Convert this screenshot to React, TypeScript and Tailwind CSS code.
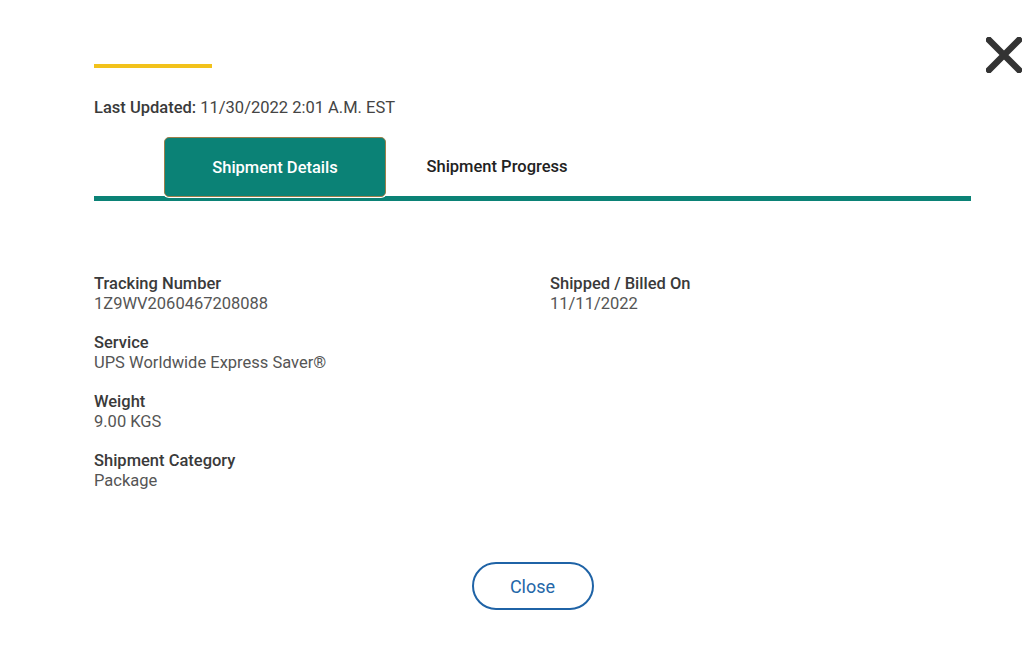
import React, { useState } from 'react';

interface Field {
  label: string;
  value: string;
}

const LEFT_FIELDS: Field[] = [
  { label: 'Tracking Number', value: '1Z9WV2060467208088' },
  { label: 'Service', value: 'UPS Worldwide Express Saver®' },
  { label: 'Weight', value: '9.00 KGS' },
  { label: 'Shipment Category', value: 'Package' },
];

const RIGHT_FIELDS: Field[] = [{ label: 'Shipped / Billed On', value: '11/11/2022' }];

const FieldBlock: React.FC<{ field: Field }> = ({ field }) => (
  <div className="mb-[19px]">
    <div className="text-[16.5px] leading-[20px] font-medium text-[#3a3a3a]">{field.label}</div>
    <div className="text-[16.5px] leading-[20px] text-[#555555]">{field.value}</div>
  </div>
);

const App: React.FC = () => {
  const [activeTab, setActiveTab] = useState<'details' | 'progress'>('details');

  return (
    <div className="relative w-[1024px] h-[651px] bg-white overflow-hidden font-['Roboto',sans-serif]">
      {/* Close icon */}
      <button className="absolute left-[986px] top-[37px] w-[36px] h-[36px]" aria-label="Close dialog">
        <svg width="36" height="36" viewBox="0 0 36 36">
          <path d="M3 3 L33 33 M33 3 L3 33" stroke="#333333" strokeWidth="6.5" strokeLinecap="square" fill="none" />
        </svg>
      </button>

      <div className="ml-[94px] w-[877px] pt-[64px]">
        <div className="w-[118px] h-[4px] bg-[#f2c21b]" />

        <p className="mt-[30px] text-[16.5px] leading-[20px] text-[#444444]">
          <span className="font-medium text-[#3a3a3a]">Last Updated:</span> 11/30/2022 2:01 A.M. EST
        </p>

        {/* Tabs */}
        <div className="mt-[19px] flex pl-[70px] h-[59px]">
          <button
            onClick={() => setActiveTab('details')}
            className={`w-[222px] h-[60px] rounded-[5px] text-[16.5px] font-medium relative z-10 pt-[2px] ${
              activeTab === 'details'
                ? 'bg-[#0b8276] text-white border-[1.5px] border-[#9c7f4a] shadow-[0_0_0_1px_white]'
                : 'text-[#222222]'
            }`}
          >
            Shipment Details
          </button>
          <button
            onClick={() => setActiveTab('progress')}
            className={`w-[222px] h-[60px] rounded-[5px] text-[16.5px] font-medium ${
              activeTab === 'progress'
                ? 'bg-[#0b8276] text-white border-[1.5px] border-[#9c7f4a]'
                : 'text-[#222222]'
            }`}
          >
            Shipment Progress
          </button>
        </div>
        <div className="h-[5px] bg-[#0b8276]" />

        {/* Details */}
        <div className="mt-[73px] grid grid-cols-[456px_1fr]">
          <div>
            {LEFT_FIELDS.map(f => (
              <FieldBlock key={f.label} field={f} />
            ))}
          </div>
          <div>
            {RIGHT_FIELDS.map(f => (
              <FieldBlock key={f.label} field={f} />
            ))}
          </div>
        </div>

        <div className="mt-[52px] flex justify-center">
          <button className="w-[122px] h-[48px] rounded-full border-2 border-[#1f63a6] text-[#2467a8] text-[18px]">
            Close
          </button>
        </div>
      </div>
    </div>
  );
};

export default App;
